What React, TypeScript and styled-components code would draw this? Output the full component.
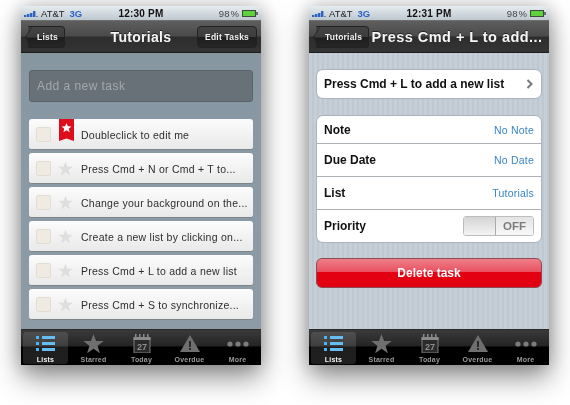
import React from 'react';
import styled, { createGlobalStyle } from 'styled-components';

const GlobalStyle = createGlobalStyle`
  html, body {
    margin: 0;
    padding: 0;
    background: #fff;
  }
  body {
    width: 570px;
    height: 405px;
    overflow: hidden;
    font-family: "Liberation Sans", Arial, sans-serif;
  }
`;

const Stage = styled.div`
  display: flex;
  gap: 48px;
  padding: 6px 0 0 21px;
`;

const Phone = styled.section`
  display: flex;
  flex-direction: column;
  width: 240px;
  height: 359px;
  box-shadow: 0 13px 26px rgba(0, 0, 0, 0.42), 0 0 18px rgba(0, 0, 0, 0.22);
  filter: blur(0.45px);
`;

const StatusBar = styled.div`
  display: grid;
  grid-template-columns: 1fr auto 1fr;
  align-items: center;
  height: 14px;
  padding: 0 3px;
  background: linear-gradient(#e6ecef, #bdc8cf);
  color: #222;
  font-size: 9.5px;
`;

const Carrier = styled.div`
  display: flex;
  align-items: center;
  gap: 1px;
`;

const Network = styled.span`
  color: #2a62c4;
  font-weight: bold;
  margin-left: 4px;
`;

const Clock = styled.span`
  color: #111;
  font-size: 10px;
  font-weight: bold;
  letter-spacing: 0.2px;
`;

const Power = styled.div`
  display: flex;
  justify-content: flex-end;
  align-items: center;
  gap: 3px;
  color: #444;
  word-spacing: -1.5px;
`;

const NavBar = styled.header`
  display: flex;
  align-items: center;
  height: 33px;
  padding: 0 4px;
  box-sizing: border-box;
  border-top: 1px solid #6e6e6e;
  border-bottom: 1px solid #1c1c1c;
  background: linear-gradient(#5e5e5e 0%, #4a4a4a 48%, #2d2d2d 52%, #343434 100%);
`;

const NavSide = styled.div<{ $end?: boolean }>`
  display: flex;
  flex: 1 1 0;
  justify-content: ${(p) => (p.$end ? 'flex-end' : 'flex-start')};
`;

const NavTitle = styled.h1<{ $wide?: boolean }>`
  flex: ${(p) => (p.$wide ? 1 : 'none')};
  margin: 0;
  color: #f6f6f6;
  font-size: ${(p) => (p.$wide ? '14.5px' : '14px')};
  font-weight: bold;
  text-align: center;
  white-space: nowrap;
  letter-spacing: ${(p) => (p.$wide ? '0.45px' : '0.3px')};
  text-shadow: 0 -1px 0 #222;
`;

const BackButton = styled.div`
  position: relative;
  display: flex;
  align-items: center;
  height: 22px;
  padding: 0 6px 0 9px;
  margin-left: 3px;
  box-sizing: border-box;
  border: 1px solid #222;
  border-left: none;
  border-radius: 0 4px 4px 0;
  background: linear-gradient(#444 0%, #3c3c3c 48%, #1e1e1e 52%, #262626 100%);
  color: #f0f0f0;
  font-size: 8.5px;
  font-weight: bold;
  letter-spacing: 0.2px;

  &::before {
    content: '';
    position: absolute;
    left: -4px;
    top: 3px;
    width: 14px;
    height: 14px;
    transform: scaleX(0.6) rotate(45deg);
    background: linear-gradient(135deg, #444 0%, #3c3c3c 48%, #1e1e1e 52%, #262626 100%);
    border-left: 1px solid #222;
    border-bottom: 1px solid #222;
  }

  & > span {
    position: relative;
  }
`;

const NavButton = styled.div`
  display: flex;
  align-items: center;
  height: 22px;
  padding: 0 7px;
  box-sizing: border-box;
  border: 1px solid #222;
  border-radius: 4px;
  background: linear-gradient(#444 0%, #3c3c3c 48%, #1e1e1e 52%, #262626 100%);
  color: #f0f0f0;
  font-size: 8.5px;
  font-weight: bold;
  letter-spacing: 0.2px;
`;

const TaskBody = styled.main`
  flex: 1;
  display: flex;
  flex-direction: column;
  padding: 17px 8px 0;
  background: linear-gradient(#8797a2, #8a9aa6 60%, #8c9ba5);
`;

const AddInput = styled.div`
  display: flex;
  align-items: center;
  height: 32px;
  padding: 0 7px;
  margin-bottom: 17px;
  box-sizing: border-box;
  border: 1px solid #5c646b;
  border-radius: 3px;
  background: #697178;
  color: #a3a9ad;
  font-size: 12px;
  letter-spacing: 0.45px;
`;

const TaskList = styled.div`
  display: flex;
  flex-direction: column;
  gap: 3px;
`;

const TaskRow = styled.div`
  position: relative;
  display: flex;
  align-items: center;
  height: 31px;
  padding-left: 7px;
  box-sizing: border-box;
  border-radius: 3px;
  border-bottom: 1px solid #7d8487;
  background: linear-gradient(#fcfcfc, #e9e9e9);
`;

const Check = styled.span`
  width: 15px;
  height: 15px;
  margin-top: 1px;
  box-sizing: border-box;
  border: 1px solid #e2ddd3;
  border-radius: 2px;
  background: #efeae2;
`;

const StarSlot = styled.span`
  display: flex;
  align-items: center;
  justify-content: center;
  width: 15px;
  margin: 1px 8px 0 7px;
`;

const Bookmark = styled.svg`
  position: absolute;
  left: 30px;
  top: 0;
`;

const TaskText = styled.span`
  margin-top: 1px;
  color: #2e2e2e;
  font-size: 10.5px;
  letter-spacing: 0.25px;
  white-space: nowrap;
`;

const TabBar = styled.nav`
  display: grid;
  grid-template-columns: repeat(5, 48px);
  height: 36px;
  padding: 2px 0 1px;
  box-sizing: border-box;
  background: linear-gradient(#3a3a3a 0%, #242424 46%, #000 48%, #000 100%);
  border-top: 1px solid #2a2a2a;
`;

const TabItem = styled.div<{ $active?: boolean }>`
  display: flex;
  flex-direction: column;
  align-items: center;
  justify-content: flex-end;
  margin: 0 1px 0 2px;
  border-radius: 3px;
  background: ${(p) => (p.$active ? 'rgba(255,255,255,0.12)' : 'transparent')};
`;

const TabIcon = styled.div`
  display: flex;
  align-items: center;
  justify-content: center;
  height: 21px;
  margin-bottom: 2px;
`;

const TabLabel = styled.span<{ $active?: boolean }>`
  color: ${(p) => (p.$active ? '#f4f4f4' : '#9a9a9a')};
  font-size: 7px;
  font-weight: bold;
  line-height: 8px;
  letter-spacing: 0.2px;
`;

const DetailBody = styled.main`
  flex: 1;
  display: flex;
  flex-direction: column;
  padding: 16px 7px 0;
  background: repeating-linear-gradient(90deg, #c6ced7 0, #c6ced7 3px, #bfc7d1 3px, #bfc7d1 5px);
`;

const Card = styled.div`
  background: #fff;
  border: 1px solid #adb2b9;
  border-radius: 7px;
  overflow: hidden;
`;

const TitleCard = styled(Card)`
  display: flex;
  align-items: center;
  justify-content: space-between;
  height: 30px;
  padding: 0 8px 0 7px;
  margin-bottom: 16px;
  box-sizing: border-box;
  color: #111;
  font-size: 12px;
  font-weight: bold;
`;

const DetailRow = styled.div`
  display: flex;
  align-items: center;
  justify-content: space-between;
  height: 33px;
  padding: 0 7px;
  box-sizing: border-box;
  border-bottom: 1px solid #adb2b9;

  &:first-child {
    height: 28px;
  }

  &:last-child {
    height: 32px;
    border-bottom: none;
  }
`;

const DetailLabel = styled.span`
  color: #111;
  font-size: 12px;
  font-weight: bold;
`;

const DetailValue = styled.span`
  color: #3a85c4;
  font-size: 10.5px;
  letter-spacing: 0.2px;
`;

const Toggle = styled.div`
  display: flex;
  width: 71px;
  height: 20px;
  box-sizing: border-box;
  border: 1px solid #bdbdbd;
  border-radius: 3px;
  overflow: hidden;
`;

const ToggleKnob = styled.span`
  width: 31px;
  border-right: 1px solid #aaa;
  background: linear-gradient(#d4d4d4, #f4f4f4);
`;

const ToggleText = styled.span`
  flex: 1;
  display: flex;
  align-items: center;
  justify-content: center;
  background: linear-gradient(#e4e4e4, #f8f8f8);
  color: #7b7b7b;
  font-size: 11.5px;
  font-weight: bold;
`;

const DeleteButton = styled.div`
  display: flex;
  align-items: center;
  justify-content: center;
  height: 30px;
  margin-top: 15px;
  box-sizing: border-box;
  border: 1px solid #8f4a52;
  border-radius: 6px;
  background: linear-gradient(#ee7f89 0%, #e8505f 46%, #e30012 48%, #e10010 100%);
  color: #fff;
  font-size: 12px;
  font-weight: bold;
`;

const tasks = [
  'Doubleclick to edit me',
  'Press Cmd + N or Cmd + T to...',
  'Change your background on the...',
  'Create a new list by clicking on...',
  'Press Cmd + L to add a new list',
  'Press Cmd + S to synchronize...',
];

const Star = ({ size, fill }: { size: number; fill: string }) => (
  <svg width={size} height={size} viewBox="0 0 24 24">
    <path fill={fill} d="M12 1l3 8.2h8.6l-6.9 5.3 2.6 8.5L12 17.9 4.7 23l2.6-8.5L.4 9.2H9z" />
  </svg>
);

const SignalBars = () => (
  <svg width="16" height="7" viewBox="0 0 16 7">
    <rect x="0" y="5" width="2.4" height="2" fill="#2a62c4" />
    <rect x="3" y="4" width="2.4" height="3" fill="#2a62c4" />
    <rect x="6" y="3" width="2.4" height="4" fill="#2a62c4" />
    <rect x="9" y="1" width="2.4" height="6" fill="#2a62c4" />
    <rect x="12" y="6" width="2" height="1" fill="#7c8a96" />
  </svg>
);

const Battery = () => (
  <svg width="16" height="7" viewBox="0 0 16 7">
    <rect x="0" y="0" width="14" height="7" fill="#3d4a3a" />
    <rect x="1" y="1" width="12" height="5" fill="#5fd13a" />
    <rect x="14" y="2" width="2" height="3" fill="#6a6a6a" />
  </svg>
);

const ListsIcon = () => (
  <svg width="19" height="17" viewBox="0 0 19 17">
    {[1, 7, 13].map((y) => (
      <g key={y}>
        <rect x="0" y={y} width="3" height="3" fill="#4fb2ee" />
        <rect x="6" y={y} width="13" height="3" fill="#67bdf2" />
      </g>
    ))}
  </svg>
);

const TodayIcon = () => (
  <svg width="18" height="19" viewBox="0 0 18 19">
    <rect x="1" y="4" width="16" height="15" fill="#2b2b2b" stroke="#7d7d7d" />
    <rect x="0.5" y="3" width="17" height="3" fill="#8a8a8a" />
    {[2, 6, 10, 14].map((x) => (
      <rect key={x} x={x} y="0" width="1.5" height="4" fill="#8a8a8a" />
    ))}
    <text x="9" y="16" textAnchor="middle" fontSize="9" fontWeight="bold" fill="#8f8f8f" fontFamily="Liberation Sans">27</text>
  </svg>
);

const OverdueIcon = () => (
  <svg width="20" height="17" viewBox="0 0 20 17">
    <path fill="#6e6e6e" d="M10 0l10 17H0z" />
    <rect x="9.1" y="6" width="1.8" height="6" fill="#222" />
    <rect x="9.1" y="13" width="1.8" height="2" fill="#222" />
  </svg>
);

const MoreIcon = () => (
  <svg width="22" height="6" viewBox="0 0 22 6">
    <circle cx="3" cy="3" r="2.6" fill="#7c7c7c" />
    <circle cx="11" cy="3" r="2.6" fill="#7c7c7c" />
    <circle cx="19" cy="3" r="2.6" fill="#7c7c7c" />
  </svg>
);

const Status = ({ time }: { time: string }) => (
  <StatusBar>
    <Carrier>
      <SignalBars />
      <span>AT&amp;T</span>
      <Network>3G</Network>
    </Carrier>
    <Clock>{time}</Clock>
    <Power>
      <span>98 %</span>
      <Battery />
    </Power>
  </StatusBar>
);

const Tabs = () => (
  <TabBar>
    <TabItem $active>
      <TabIcon><ListsIcon /></TabIcon>
      <TabLabel $active>Lists</TabLabel>
    </TabItem>
    <TabItem>
      <TabIcon><Star size={21} fill="#6f6f6f" /></TabIcon>
      <TabLabel>Starred</TabLabel>
    </TabItem>
    <TabItem>
      <TabIcon><TodayIcon /></TabIcon>
      <TabLabel>Today</TabLabel>
    </TabItem>
    <TabItem>
      <TabIcon><OverdueIcon /></TabIcon>
      <TabLabel>Overdue</TabLabel>
    </TabItem>
    <TabItem>
      <TabIcon><MoreIcon /></TabIcon>
      <TabLabel>More</TabLabel>
    </TabItem>
  </TabBar>
);

const App = () => (
  <Stage>
    <GlobalStyle />
    <Phone>
      <Status time="12:30 PM" />
      <NavBar>
        <NavSide><BackButton><span>Lists</span></BackButton></NavSide>
        <NavTitle>Tutorials</NavTitle>
        <NavSide $end><NavButton>Edit Tasks</NavButton></NavSide>
      </NavBar>
      <TaskBody>
        <AddInput>Add a new task</AddInput>
        <TaskList>
          {tasks.map((task, i) => (
            <TaskRow key={task}>
              <Check />
              <StarSlot>{i > 0 && <Star size={15} fill="#dedede" />}</StarSlot>
              {i === 0 && (
                <Bookmark width="15" height="22" viewBox="0 0 15 22">
                  <path fill="#dd0d1c" d="M0 0h15v22l-7.5-2.5L0 22z" />
                  <path fill="#fff" d="M7.5 4l1.4 3.3 3.5.2-2.7 2.3.9 3.4-3.1-1.9-3.1 1.9.9-3.4-2.7-2.3 3.5-.2z" />
                </Bookmark>
              )}
              <TaskText>{task}</TaskText>
            </TaskRow>
          ))}
        </TaskList>
      </TaskBody>
      <Tabs />
    </Phone>
    <Phone>
      <Status time="12:31 PM" />
      <NavBar>
        <BackButton><span>Tutorials</span></BackButton>
        <NavTitle $wide>Press Cmd + L to add...</NavTitle>
      </NavBar>
      <DetailBody>
        <TitleCard>
          <span>Press Cmd + L to add a new list</span>
          <svg width="7" height="10" viewBox="0 0 7 10">
            <path d="M1.5 1l4 4-4 4" fill="none" stroke="#777" strokeWidth="2" />
          </svg>
        </TitleCard>
        <Card>
          <DetailRow><DetailLabel>Note</DetailLabel><DetailValue>No Note</DetailValue></DetailRow>
          <DetailRow><DetailLabel>Due Date</DetailLabel><DetailValue>No Date</DetailValue></DetailRow>
          <DetailRow><DetailLabel>List</DetailLabel><DetailValue>Tutorials</DetailValue></DetailRow>
          <DetailRow>
            <DetailLabel>Priority</DetailLabel>
            <Toggle><ToggleKnob /><ToggleText>OFF</ToggleText></Toggle>
          </DetailRow>
        </Card>
        <DeleteButton>Delete task</DeleteButton>
      </DetailBody>
      <Tabs />
    </Phone>
  </Stage>
);

export default App;
